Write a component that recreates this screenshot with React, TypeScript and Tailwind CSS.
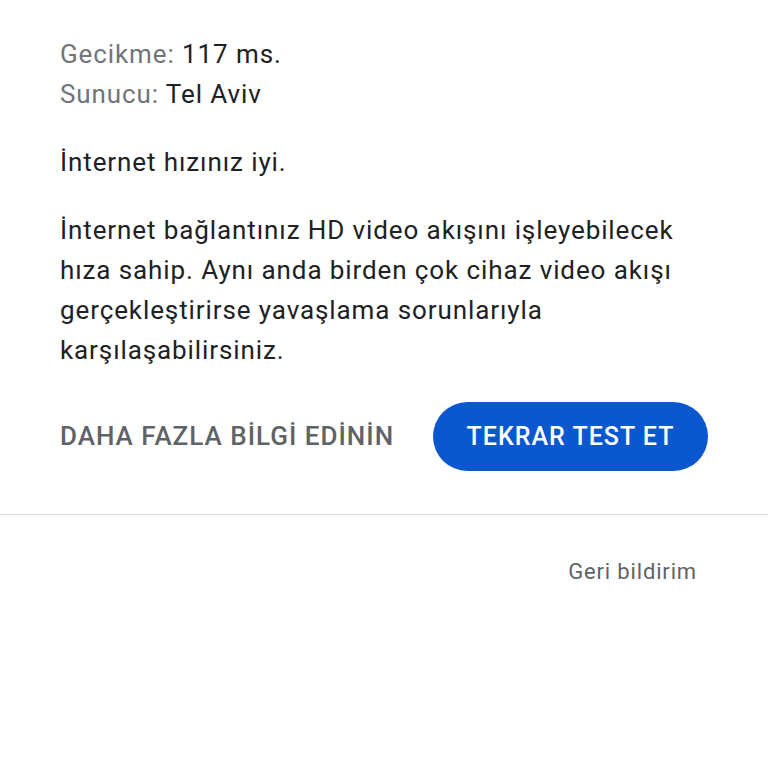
export default function App() {
  return (
    <div className="min-h-[768px] w-[768px] bg-white font-['Roboto',sans-serif]">
      <div className="px-[60px] pt-[34px]">
        <div className="text-[26px] leading-[40px] tracking-[0.9px]">
          <div>
            <span className="text-[#70757a]">Gecikme: </span>
            <span className="text-[#202124]">117 ms.</span>
          </div>
          <div>
            <span className="text-[#70757a]">Sunucu: </span>
            <span className="text-[#202124]">Tel Aviv</span>
          </div>
        </div>
        <p className="mt-[28px] text-[26px] leading-[40px] tracking-[0.9px] text-[#202124]">İnternet hızınız iyi.</p>
        <p className="mt-[28px] w-[665px] text-[26px] leading-[40px] tracking-[0.9px] text-[#202124]">
          İnternet bağlantınız HD video akışını işleyebilecek hıza sahip. Aynı anda birden çok cihaz video akışı gerçekleştirirse yavaşlama sorunlarıyla karşılaşabilirsiniz.
        </p>
        <div className="mt-[32px] flex items-center justify-between">
          <button className="text-[26px] font-medium tracking-[1px] text-[#5f6368]">DAHA FAZLA BİLGİ EDİNİN</button>
          <button className="flex h-[69px] w-[275px] items-center justify-center rounded-full bg-[#0b57d0] text-[25px] font-medium tracking-[1px] text-white">
            TEKRAR TEST ET
          </button>
        </div>
      </div>
      <div className="mt-[43px] h-px w-full bg-[#dadce0]" />
      <div className="flex justify-end px-[71px] pt-[40px]">
        <span className="text-[22px] tracking-[0.85px] text-[#5f6368]">Geri bildirim</span>
      </div>
    </div>
  );
}
